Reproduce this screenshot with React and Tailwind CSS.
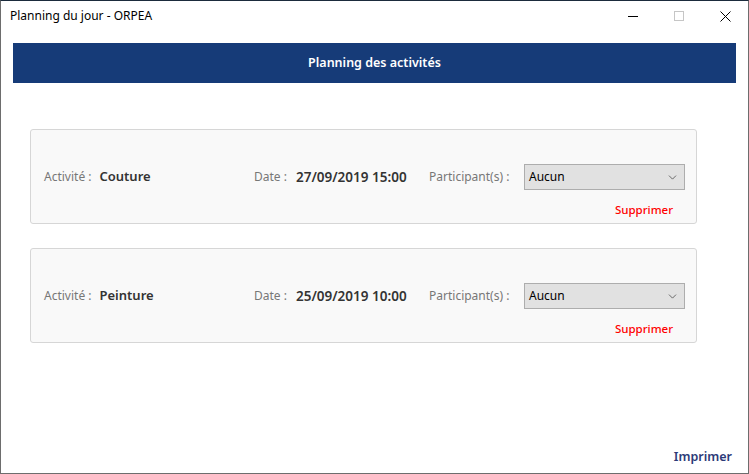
import { ChevronDown } from 'lucide-react';

const activities = [
  { id: 1, name: 'Couture', date: '27/09/2019 15:00' },
  { id: 2, name: 'Peinture', date: '25/09/2019 10:00' },
];

const ActivityCard = ({ name, date }) => (
  <div className="h-[95px] rounded-[3px] border border-[#d6d6d6] bg-[#f9f9f9] pl-[13px] pr-[11px] flex flex-col">
    <div className="flex items-center mt-[34px] h-[26px]">
      <div className="w-[210px] flex items-center">
        <span className="text-[12px] text-[#777]">Activité :</span>
        <span className="ml-[8px] text-[13px] font-semibold text-[#333]">{name}</span>
      </div>
      <div className="w-[175px] flex items-center">
        <span className="text-[12px] text-[#777]">Date :</span>
        <span className="ml-[9px] text-[13.5px] font-semibold text-[#333]">{date}</span>
      </div>
      <span className="text-[12px] text-[#777] w-[95px]">Participant(s) :</span>
      <div className="ml-auto w-[161px] h-[26px] border border-[#adadad] bg-[#e1e1e1] flex items-center justify-between pl-[4px] pr-[5px]">
        <span className="text-[12px] text-black">Aucun</span>
        <ChevronDown size={13} strokeWidth={1.4} className="text-[#444]" />
      </div>
    </div>
    <div className="flex justify-end mt-[11px] pr-[12px]">
      <span className="text-[11.5px] font-medium text-[#ff0000]">Supprimer</span>
    </div>
  </div>
);

const App = () => {
  return (
    <div
      className="w-[749px] h-[474px] bg-white border border-[#6d6d6d] border-t-[#1b2b3c] flex flex-col overflow-hidden"
      style={{ fontFamily: '"Noto Sans", "Open Sans", sans-serif' }}
    >
      {/* title bar */}
      <div className="h-[30px] flex items-center justify-between">
        <span className="ml-[9px] text-[12px] text-black">Planning du jour - ORPEA</span>
        <div className="flex items-center h-full">
          <div className="w-[46px] h-full flex items-center justify-center">
            <div className="w-[10px] h-px bg-black" />
          </div>
          <div className="w-[46px] h-full flex items-center justify-center">
            <div className="w-[10px] h-[10px] border border-[#c6c6c6]" />
          </div>
          <div className="w-[46px] h-full flex items-center justify-center">
            <svg width="11" height="11" viewBox="0 0 11 11">
              <path d="M0.5 0.5L10.5 10.5M10.5 0.5L0.5 10.5" stroke="#000" strokeWidth="1" />
            </svg>
          </div>
        </div>
      </div>

      {/* header */}
      <div className="mx-[12px] mt-[12px] h-[40px] bg-[#163b78] flex items-center justify-center">
        <span className="text-[12.5px] font-semibold text-white">Planning des activités</span>
      </div>

      {/* cards */}
      <div className="mt-[46px] ml-[29px] w-[667px] flex flex-col gap-[24px]">
        {activities.map((a) => (
          <ActivityCard key={a.id} name={a.name} date={a.date} />
        ))}
      </div>

      <div className="mt-auto mb-[6px] flex justify-end pr-[16px]">
        <span className="text-[12.5px] font-semibold text-[#2c3a78]">Imprimer</span>
      </div>
    </div>
  );
};

export default App;
